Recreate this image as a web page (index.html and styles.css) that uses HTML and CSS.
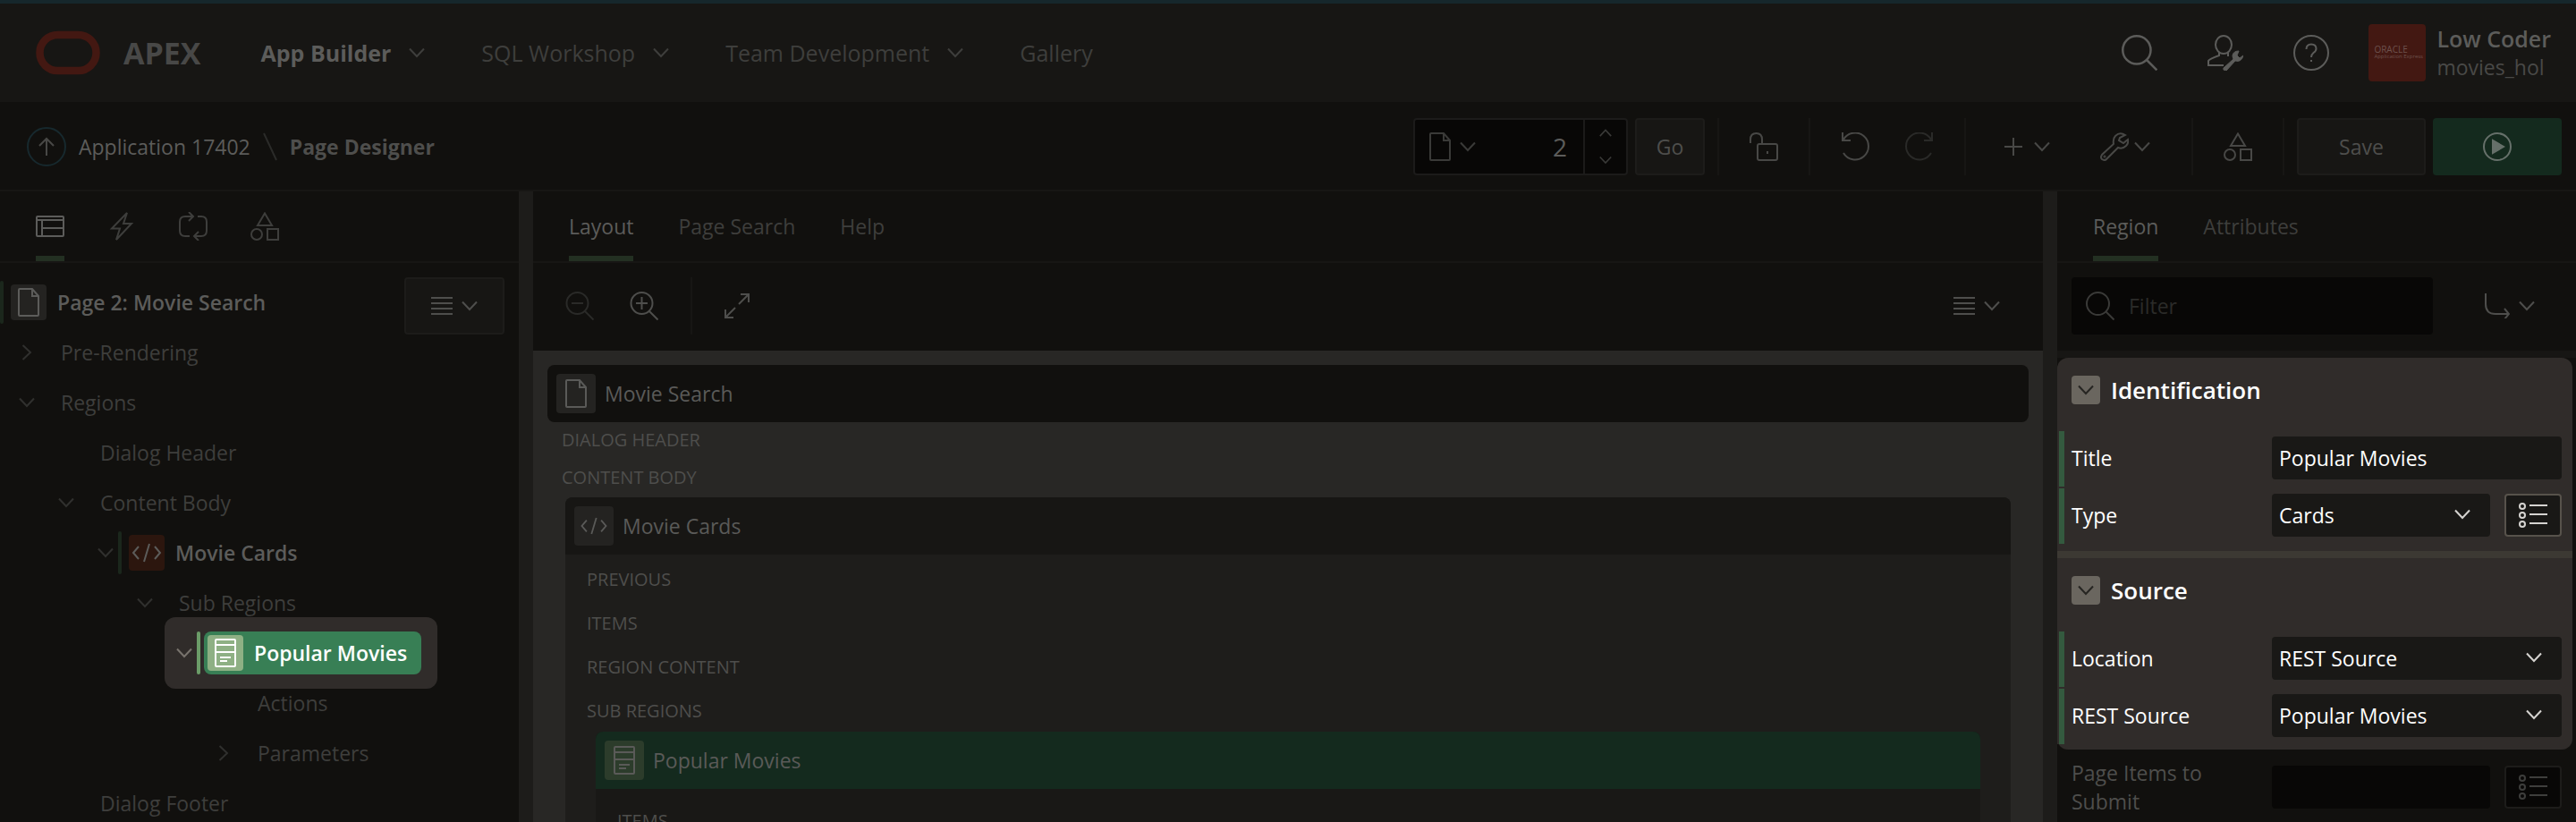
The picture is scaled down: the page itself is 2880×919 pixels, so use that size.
FILE: index.html
```html
<!DOCTYPE html>
<html lang="en">
<head>
<meta charset="utf-8">
<title>Page Designer</title>
<link rel="stylesheet" href="styles.css">
</head>
<body>
<svg class="sprite" aria-hidden="true">
  <symbol id="chev" viewBox="0 0 18 18"><path d="M1 4.500 9 13 17 4.500"/></symbol>
  <symbol id="chev-r" viewBox="0 0 18 18"><path d="M4.500 1 13 9 4.500 17"/></symbol>
  <symbol id="chev-u" viewBox="0 0 18 18"><path d="M1 13 9 4.500 17 13"/></symbol>
  <symbol id="search" viewBox="0 0 32 32"><circle cx="13.500" cy="13.500" r="12.500"/><path d="M22 22 31.500 31.500"/></symbol>
  <symbol id="zoom-out" viewBox="0 0 32 32"><circle cx="13.500" cy="13" r="12"/><path d="M22 22 31.500 31.500M7 13H20"/></symbol>
  <symbol id="zoom-in" viewBox="0 0 32 32"><circle cx="13.500" cy="13" r="12"/><path d="M22 22 31.500 31.500M7 13H20M13.500 6V20"/></symbol>
  <symbol id="doc" viewBox="0 0 32 32"><path d="M6 1H20L27 9V30Q27 31 26 31H6Q5 31 5 30V2Q5 1 6 1Z M20 1V9H27"/></symbol>
  <symbol id="shapes" viewBox="0 0 32 32"><path d="M16 1.500 24 15H8Z"/><circle cx="7" cy="25" r="6"/><rect x="19" y="19" width="12" height="12"/></symbol>
  <symbol id="layout" viewBox="0 0 32 32"><rect x="1" y="5" width="30" height="22" rx="1"/><path d="M1 9H31M7 9V27M7 18H31"/></symbol>
  <symbol id="bolt" viewBox="0 0 32 32"><path d="M22 1 5 18.500H14L10 31 27 13H18Z"/></symbol>
  <symbol id="cycle" viewBox="0 0 32 32"><path d="M12 27H7Q1 27 1 21V11Q1 5 7 5H15M11 0 16 5 11 10M21 5H25Q31 5 31 11V21Q31 27 25 27H17M22 22 17 27 22 32"/></symbol>
  <symbol id="lines" viewBox="0 0 24 24"><path d="M0 3H24M0 9H24M0 15H24M0 21H24"/></symbol>
  <symbol id="code" viewBox="0 0 40 40"><path d="M11 13 5 20 11 27M29 13 35 20 29 27M23 10 17 30"/></symbol>
  <symbol id="card" viewBox="0 0 40 40"><rect x="9" y="5" width="22" height="30" rx="1"/><path d="M9 11H31M9 19H31M14 25H26M14 29H22"/></symbol>
  <symbol id="unlock" viewBox="0 0 32 32"><path d="M1 12V8Q1 1 7.500 1 14 1 14 8V13"/><rect x="9" y="13" width="22" height="18" rx="2"/><path d="M20 21V24"/></symbol>
  <symbol id="undo" viewBox="0 0 32 32"><path d="M1 0V9H10M2 8A15 15 0 1 1 2 23"/></symbol>
  <symbol id="plus" viewBox="0 0 20 20"><path d="M10 0V20M0 10H20"/></symbol>
  <symbol id="wrench" viewBox="0 0 32 32"><path d="M28 3Q22 -1 17 4 14 7 15 13L2 25Q0 28 2 30 5 32 7 30L20 17Q25 19 29 15 32 12 31 8L26 12 21 9 22 6Z"/><circle cx="5" cy="27" r=".5"/></symbol>
  <symbol id="user" viewBox="0 0 40 40"><ellipse cx="18" cy="11" rx="9" ry="10"/><path d="M13 20V23Q2 27 1 29V34H18M23 20V24"/><path class="solid thin" d="M35 18Q29 18 28 23 28 25 29 27L18 37Q17 40 21 40L31 29Q38 31 40 23L36 26 33 23Z"/></symbol>
  <symbol id="help" viewBox="0 0 40 40"><circle cx="20" cy="20" r="19"/><path d="M14.500 16Q14.500 10.500 20 10.500 25.500 10.500 25.500 15.500 25.500 18 22.500 20 20 22 20 25M20 28V30"/></symbol>
  <symbol id="up" viewBox="0 0 44 44"><circle class="ring" cx="22" cy="22" r="21"/><path d="M22 32V13M14 21 22 13 30 21"/></symbol>
  <symbol id="play" viewBox="0 0 32 32"><circle cx="16" cy="16" r="15"/><path class="solid" d="M11 9V23L23 16Z"/></symbol>
  <symbol id="expand" viewBox="0 0 28 28"><path d="M16 12 27 1M18 1H27V10M12 16 1 27M1 18V27H10"/></symbol>
  <symbol id="goto" viewBox="0 0 28 28"><path d="M1 0V12Q1 23 12 23H27M22 17 27 23 22 29"/></symbol>
  <symbol id="list" viewBox="0 0 32 32"><circle cx="4" cy="6" r="3"/><circle cx="4" cy="16" r="3"/><circle cx="4" cy="26" r="3"/><path d="M12 5H32M12 15H32M12 25H32"/></symbol>
</svg>

<header class="topbar">
  <svg class="logo" viewBox="0 0 72 48" aria-hidden="true"><rect x="4.500" y="4" width="63" height="40" rx="20"/></svg>
  <span class="brand">APEX</span>
  <nav class="mainnav">
    <a class="navitem current" href="#">App Builder<svg class="i18"><use href="#chev"/></svg></a>
    <a class="navitem" href="#">SQL Workshop<svg class="i18"><use href="#chev"/></svg></a>
    <a class="navitem" href="#">Team Development<svg class="i18"><use href="#chev"/></svg></a>
    <a class="navitem" href="#">Gallery</a>
  </nav>
  <div class="tools">
    <button aria-label="Search"><svg class="i40"><use href="#search"/></svg></button>
    <button aria-label="Administration"><svg class="i40"><use href="#user"/></svg></button>
    <button aria-label="Help"><svg class="i40"><use href="#help"/></svg></button>
  </div>
  <div class="account">
    <div class="avatar"><span class="av-brand">ORACLE</span><span class="av-sub">Application Express</span></div>
    <div><div class="acc-name">Low Coder</div><div class="acc-space">movies_hol</div></div>
  </div>
</header>

<div class="toolbar">
  <nav class="crumbs">
    <a href="#" aria-label="Up"><svg class="i44"><use href="#up"/></svg></a>
    <a class="crumb" href="#">Application 17402</a>
    <svg class="slash" viewBox="0 0 16 32"><path d="M1 1 15 31"/></svg>
    <span class="here">Page Designer</span>
  </nav>
  <div class="pagepick">
    <button class="pagemenu" aria-label="Page"><svg class="i32"><use href="#doc"/></svg><svg class="i18"><use href="#chev"/></svg></button>
    <input class="pageno" aria-label="Page number" value="2">
    <div class="spin">
      <button aria-label="Next page"><svg class="i14"><use href="#chev-u"/></svg></button>
      <button aria-label="Previous page"><svg class="i14"><use href="#chev"/></svg></button>
    </div>
  </div>
  <button class="btn go">Go</button>
  <div class="group"><button aria-label="Unlock"><svg class="i32"><use href="#unlock"/></svg></button></div>
  <div class="group undo"><button aria-label="Undo"><svg class="i32"><use href="#undo"/></svg></button><button class="off" aria-label="Redo"><svg class="i32 flip"><use href="#undo"/></svg></button></div>
  <div class="group make"><button class="pair wide" aria-label="Create"><svg class="i20"><use href="#plus"/></svg><svg class="i18"><use href="#chev"/></svg></button><button class="pair tight" aria-label="Utilities"><svg class="i32"><use href="#wrench"/></svg><svg class="i18"><use href="#chev"/></svg></button></div>
  <div class="group"><button aria-label="Shared components"><svg class="i32"><use href="#shapes"/></svg></button></div>
  <div class="group last"><button class="btn save">Save</button><button class="btn run" aria-label="Run"><svg class="i32"><use href="#play"/></svg></button></div>
</div>

<main class="panes">
  <section class="pane">
    <div class="tabs icons">
      <button class="tab on" aria-label="Rendering"><svg class="i32"><use href="#layout"/></svg></button>
      <button class="tab" aria-label="Dynamic Actions"><svg class="i32"><use href="#bolt"/></svg></button>
      <button class="tab" aria-label="Processing"><svg class="i32"><use href="#cycle"/></svg></button>
      <button class="tab" aria-label="Shared Components"><svg class="i32"><use href="#shapes"/></svg></button>
    </div>
    <div class="tree">
      <div class="row root"><i class="bar"></i><span class="node"><span class="tile"><svg class="i32"><use href="#doc"/></svg></span>Page 2: Movie Search</span>
        <button class="btn treemenu" aria-label="Tree options"><svg class="i24"><use href="#lines"/></svg><svg class="i18"><use href="#chev"/></svg></button></div>
      <div class="row l1"><svg class="toggle"><use href="#chev-r"/></svg><span class="leaf">Pre-Rendering</span></div>
      <div class="row l1"><svg class="toggle"><use href="#chev"/></svg><span class="leaf">Regions</span></div>
      <div class="row l2"><span class="toggle"></span><span class="leaf">Dialog Header</span></div>
      <div class="row l2"><svg class="toggle"><use href="#chev"/></svg><span class="leaf">Content Body</span></div>
      <div class="row l3"><svg class="toggle"><use href="#chev"/></svg><i class="bar"></i><span class="node"><span class="tile rust"><svg class="i40"><use href="#code"/></svg></span>Movie Cards</span></div>
      <div class="row l4"><svg class="toggle"><use href="#chev"/></svg><span class="leaf">Sub Regions</span></div>
      <div class="row l5"><div class="spot"><svg class="toggle"><use href="#chev"/></svg><i class="bar"></i><span class="node"><span class="tile"><svg class="i40"><use href="#card"/></svg></span>Popular Movies</span></div></div>
      <div class="row l6"><span class="toggle"></span><span class="leaf">Actions</span></div>
      <div class="row l6"><svg class="toggle"><use href="#chev-r"/></svg><span class="leaf">Parameters</span></div>
      <div class="row l2"><span class="toggle"></span><span class="leaf">Dialog Footer</span></div>
    </div>
  </section>
  <div class="splitter"></div>
  <section class="pane">
    <div class="tabs">
      <button class="tab on">Layout</button><button class="tab">Page Search</button><button class="tab">Help</button>
    </div>
    <div class="subbar">
      <button class="off" aria-label="Zoom out"><svg class="i32"><use href="#zoom-out"/></svg></button>
      <button aria-label="Zoom in"><svg class="i32"><use href="#zoom-in"/></svg></button>
      <span class="rule"></span>
      <button aria-label="Expand"><svg class="i28"><use href="#expand"/></svg></button>
      <button class="pair push" aria-label="Layout options"><svg class="i24"><use href="#lines"/></svg><svg class="i18"><use href="#chev"/></svg></button>
    </div>
    <div class="canvas">
      <div class="head page"><span class="tile"><svg class="i32"><use href="#doc"/></svg></span>Movie Search</div>
      <div class="slot s1">Dialog Header</div>
      <div class="slot s1">Content Body</div>
      <div class="region">
        <div class="head"><span class="tile"><svg class="i36"><use href="#code"/></svg></span>Movie Cards</div>
        <div class="slots">
          <div class="slot">Previous</div>
          <div class="slot">Items</div>
          <div class="slot">Region Content</div>
          <div class="slot">Sub Regions</div>
        </div>
        <div class="region sub">
          <div class="head"><span class="tile"><svg class="i40"><use href="#card"/></svg></span>Popular Movies</div>
          <div class="slots"><div class="slot">Items</div></div>
        </div>
      </div>
    </div>
  </section>
  <div class="splitter"></div>
  <section class="pane">
    <div class="tabs">
      <button class="tab on">Region</button><button class="tab">Attributes</button>
    </div>
    <div class="subbar props-bar">
      <div class="filter"><svg class="i32"><use href="#search"/></svg><input aria-label="Filter" placeholder="Filter"></div>
      <button class="pair push" aria-label="Go to group"><svg class="i28"><use href="#goto"/></svg><svg class="i18"><use href="#chev"/></svg></button>
    </div>
    <div class="props">
      <div class="lit">
        <div class="grp">
          <h2><button class="fold" aria-label="Collapse Identification"><svg class="i18"><use href="#chev"/></svg></button>Identification</h2>
          <div class="prop changed"><label for="p-title">Title</label><input class="field" id="p-title" value="Popular Movies"></div>
          <div class="prop changed"><label for="p-type">Type</label><span class="sel"><select class="field" id="p-type"><option>Cards</option></select><svg class="i18"><use href="#chev"/></svg></span><button class="pick" aria-label="Pick type"><svg class="i32"><use href="#list"/></svg></button></div>
        </div>
        <div class="grp">
          <h2><button class="fold" aria-label="Collapse Source"><svg class="i18"><use href="#chev"/></svg></button>Source</h2>
          <div class="prop changed"><label for="p-loc">Location</label><span class="sel"><select class="field" id="p-loc"><option>REST Source</option></select><svg class="i18"><use href="#chev"/></svg></span></div>
          <div class="prop changed"><label for="p-rest">REST Source</label><span class="sel"><select class="field" id="p-rest"><option>Popular Movies</option></select><svg class="i18"><use href="#chev"/></svg></span></div>
        </div>
      </div>
      <div class="prop dim"><label for="p-items">Page Items to Submit</label><input class="field" id="p-items"><button class="pick" aria-label="Pick items"><svg class="i32"><use href="#list"/></svg></button></div>
    </div>
  </section>
</main>
</body>
</html>
```
FILE: styles.css
```css
* { box-sizing: border-box; }
body {
  margin: 0;
  height: 100vh;
  overflow: hidden;
  display: flex;
  flex-direction: column;
  background: #11100e;
  color: #3e3e3c;
  font: 23px/32px "Open Sans", "Noto Sans", sans-serif;
}
button, input, select { font: inherit; color: inherit; border: 0; background: none; padding: 0; margin: 0; }
button { display: inline-flex; align-items: center; justify-content: center; }
a { color: inherit; text-decoration: none; }
.sprite { position: absolute; width: 0; height: 0; }
svg { fill: none; stroke: currentColor; stroke-width: 2; flex: none; overflow: visible; }
.solid { fill: currentColor; }
.thin { stroke-width: 1; }
.ring { stroke: #17292e; }
.i14 { width: 14px; height: 14px; }
.i18 { width: 18px; height: 18px; }
.i20 { width: 20px; height: 20px; }
.i24 { width: 24px; height: 24px; }
.i28 { width: 28px; height: 28px; }
.i32 { width: 32px; height: 32px; }
.i36 { width: 36px; height: 36px; }
.i40 { width: 40px; height: 40px; }
.i44 { width: 44px; height: 44px; display: block; }
.flip { transform: scaleX(-1); }
.off { color: #2a2a28; }

/* Top bar */
.topbar {
  flex: none;
  display: flex;
  align-items: center;
  height: 114px;
  padding: 0 28px 0 40px;
  border-top: 4px solid #16272c;
  background: #171614;
}
.logo { width: 72px; height: 48px; stroke: #431812; stroke-width: 8.500; }
.brand { margin-left: 26px; font-size: 34px; font-weight: 700; color: #484847; }
.mainnav { display: flex; gap: 63px; margin-left: 67px; font-size: 25px; }
.navitem { display: flex; align-items: center; gap: 20px; }
.current { color: #5c5c5a; font-weight: 700; }
.current svg { color: #3e3e3c; }
.tools { display: flex; gap: 56px; margin-left: auto; color: #5c5c5a; }
.account { display: flex; align-items: center; gap: 12px; margin-left: 44px; }
.avatar {
  display: flex;
  flex-direction: column;
  align-items: flex-start;
  justify-content: center;
  width: 64px;
  height: 64px;
  padding-left: 6px;
  border-radius: 4px;
  background: #431812;
  color: #6d514d;
  white-space: nowrap;
}
.av-brand { font-size: 10px; line-height: 8px; }
.av-sub { font-size: 6px; line-height: 8px; }
.acc-name { font-size: 25px; font-weight: 600; color: #5c5c5a; }
.acc-space { color: #494947; }

/* Toolbar */
.toolbar {
  flex: none;
  display: flex;
  align-items: center;
  height: 100px;
  padding: 2px 16px 0 30px;
  border-bottom: 2px solid #171614;
  color: #484846;
}
.crumbs { display: flex; align-items: center; gap: 14px; margin-right: auto; }
.crumb { color: #5c5c5a; }
.slash { width: 16px; height: 32px; color: #2b2b29; }
.here { font-weight: 700; color: #4e4e4c; }
.pagepick {
  display: flex;
  width: 240px;
  height: 64px;
  border: 2px solid #1c1b1a;
  border-radius: 4px;
  background: #080706;
  color: #3a3a38;
}
.pagemenu { gap: 6px; padding-left: 12px; }
.pageno { flex: 1; min-width: 0; padding-right: 18px; text-align: right; font-size: 28px; color: #5c5c5a; }
.spin { display: flex; flex-direction: column; justify-content: space-around; width: 48px; border-left: 2px solid #1c1b1a; }
.btn { height: 64px; border: 2px solid #1d1c1a; border-radius: 4px; background: #171614; color: #4e4e4c; }
.go { width: 78px; margin: 0 14px 0 8px; }
.group { display: flex; align-items: center; height: 64px; padding: 0 34px; border-left: 2px solid #171614; }
.undo { gap: 38px; padding: 0 35px; }
.make { gap: 56px; padding: 0 46px 0 43px; }
.pair { gap: 10px; }
.tight { gap: 6px; }
.wide { gap: 13px; }
.last { gap: 8px; padding: 0 0 0 14px; }
.save, .run { width: 144px; }
.run { border: 0; background: #142a1e; color: #66706a; }

/* Panes */
.panes { flex: 1; min-height: 0; display: grid; grid-template-columns: 580px 16px 1fr 16px 580px; }
.pane { min-width: 0; overflow: hidden; }
.splitter { background: #1d1c1a; }
.tabs { display: flex; gap: 50px; height: 80px; padding: 0 40px; border-bottom: 2px solid #171614; }
.icons { gap: 48px; }
.tab { height: 78px; padding: 6px 0 0; border-bottom: 6px solid transparent; }
.on { color: #5c5c5a; border-color: #233022; }
.subbar { display: flex; align-items: center; gap: 40px; height: 98px; padding: 0 48px 2px 36px; color: #4e4e4c; }
.rule { width: 2px; height: 64px; margin: 0 -4px; background: #171614; }
.push { margin-left: auto; }

/* Tree */
.tree { padding-top: 16px; }
.row { display: flex; align-items: center; height: 56px; }
.root { padding-right: 16px; }
.treemenu { width: 112px; gap: 10px; margin: 8px 0 0 auto; }
.l1 { padding-left: 16px; }
.l2 { padding-left: 60px; }
.l3 { padding-left: 104px; }
.l4 { padding-left: 148px; }
.l5 { padding-left: 192px; }
.l6 { padding-left: 236px; }
.toggle { width: 28px; height: 18px; color: #30302e; }
.leaf { padding-left: 24px; }
.bar { width: 4px; height: 48px; border-radius: 2px; background: #1b271c; }
.node { display: flex; align-items: center; gap: 12px; height: 48px; margin-left: 4px; padding: 0 16px 0 4px; border-radius: 8px; font-weight: 600; color: #5c5c5a; }
.tile { flex: none; display: flex; align-items: center; justify-content: center; width: 40px; height: 40px; border-radius: 4px; background: #242321; }
.rust { background: #2c160e; }
.spot { position: relative; z-index: 0; display: flex; align-items: center; }
.spot::before { content: ""; position: absolute; z-index: -1; inset: -16px -18px -16px -8px; border-radius: 12px; background: #302c2a; }
.spot .toggle { color: #78736d; }
.spot .bar { background: #6b9c68; }
.spot .node { background: #387f55; color: #fff; }
.spot .tile { background: #8eb084; }

/* Layout canvas */
.canvas { height: 100%; padding: 16px 16px 0; background: #282725; color: #4e4e4c; }
.head { display: flex; align-items: center; gap: 10px; height: 64px; padding: 0 10px; background: #171614; color: #5a5a58; }
.head .tile { width: 44px; height: 44px; background: #242321; }
.page { border-radius: 8px; background: #11100e; }
.slot { font-size: 20px; text-transform: uppercase; }
.s1 { height: 42px; padding: 4px 16px; }
.region { margin: 0 20px; border-radius: 8px 8px 0 0; overflow: hidden; background: #1e1d1b; height: 100%; }
.slots { display: grid; gap: 17px; padding: 12px 24px 7px; }
.sub { margin: 0 34px; background: #191816; }
.sub .head { background: #142a1e; }
.sub .tile { background: #2c3c2b; }
.sub .slots { padding-top: 20px; }

/* Properties */
.props-bar { padding: 0 46px 2px 16px; }
.filter { display: flex; align-items: center; gap: 16px; width: 404px; height: 64px; padding: 0 16px; border-radius: 4px; background: #080706; color: #3a3a38; }
.filter input { flex: 1; min-width: 0; }
.filter input::placeholder { color: #2b2b29; opacity: 1; }
.props { border-top: 8px solid #171614; }
.lit { margin-right: 4px; padding-bottom: 6px; border-radius: 12px; background: #302c2a; color: #fff; }
.grp + .grp { margin-top: 8px; border-top: 8px solid #3c3933; }
h2 { display: flex; align-items: center; gap: 12px; height: 72px; margin: 0 0 8px; padding-left: 16px; font-size: 26px; font-weight: 600; }
.fold { width: 32px; height: 32px; border-radius: 4px; background: #6a665f; color: #262522; }
.prop { display: flex; align-items: center; gap: 16px; min-height: 64px; padding: 0 12px 0 16px; }
.changed { box-shadow: inset 2px 0 #302c2a, inset 0 2px #302c2a, inset 8px 0 #345a3f; }
.prop label { width: 208px; flex: none; }
.field { flex: 1; min-width: 0; width: 100%; height: 48px; padding: 0 8px; border-radius: 4px; background: #191816; appearance: none; }
.sel { position: relative; flex: 1; display: flex; }
.sel svg { position: absolute; right: 22px; top: 14px; color: #d5d3d0; pointer-events: none; }
.pick { width: 64px; height: 48px; border: 2px solid #57524b; border-radius: 4px; background: #191816; color: #d5d3d0; }
.dim { margin-top: 10px; padding-right: 16px; color: #4e4e4c; }
.dim .field, .dim .pick { background: #080706; }
.dim .pick { border-color: #1d1c1a; color: #3e3e3c; }
```
